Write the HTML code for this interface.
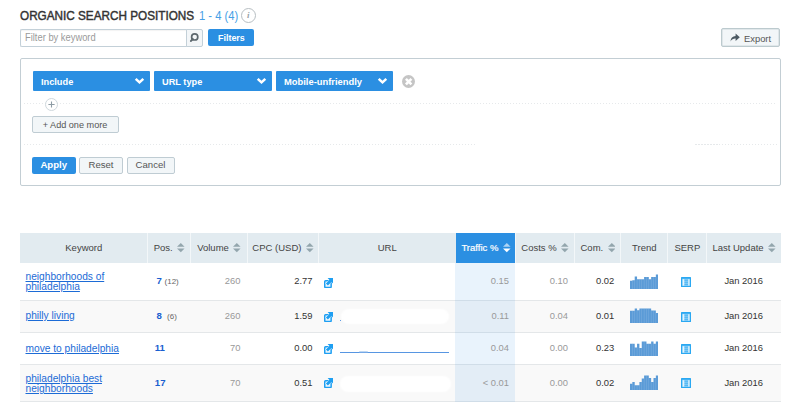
<!DOCTYPE html>
<html lang="en">
<head>
<meta charset="utf-8">
<title>Organic Search Positions</title>
<style>
*{box-sizing:border-box;margin:0;padding:0}
html,body{width:800px;height:413px;overflow:hidden;background:#fff}
body{position:relative;font-family:"Liberation Sans",Arial,sans-serif;color:#333}
.abs{position:absolute}
.sx{display:inline-block;transform-origin:0 50%;white-space:nowrap}
/* heading */
#title{left:20px;top:8px;height:16px;line-height:16px;font-size:12.6px;font-weight:normal;color:#333;white-space:nowrap;-webkit-text-stroke:.45px #333}
#title .sx{transform:scaleX(.932)}
#range{left:198.5px;top:8px;height:16px;line-height:16px;font-size:12.6px;color:#469fe6;white-space:nowrap}
#range .sx{transform:scaleX(.89)}
#info{left:241px;top:7.8px;width:15px;height:15px;border:1.2px solid #b7bec2;border-radius:50%;color:#98a1a6;font:italic bold 9px/12px "Liberation Serif",serif;text-align:center;padding-right:.5px}
/* toolbar */
#kw{left:20px;top:28.7px;width:167px;height:18px;border:1px solid #c3d0d8;border-right:none;border-radius:2px 0 0 2px;background:#fff;font-size:10px;line-height:16px;color:#9a9a9a;padding-left:4px;box-shadow:inset 0 1px 1px rgba(0,0,0,.05)}
#kw .sx{transform:scaleX(.935)}
#go{left:185.8px;top:28.7px;width:17.2px;height:18px;border:1px solid #c3d0d8;border-radius:0 2px 2px 0;background:#f3f6f8}
.btn{height:18px;line-height:17px;font-size:9.6px;text-align:center;border-radius:2px;white-space:nowrap}
.blue{background:#2b8fe2;color:#fff;font-weight:bold}
.grey{background:#f2f6f8;border:1px solid #bfccd3;color:#555;line-height:15px}
#filters{left:208.2px;top:28.8px;width:45.6px;height:17.7px}
#filters .sx{transform:scaleX(.93);transform-origin:50% 50%}
#export{left:720.9px;top:28.2px;width:59.3px;height:18.5px;line-height:16.5px;padding-top:1.8px;font-size:9.4px;border-color:#bccace;box-shadow:inset 0 0 0 .5px #cdd7db}
/* panel */
#panel{left:20px;top:58.3px;width:760.8px;height:127.7px;border:1px solid #c3ced4;border-radius:2px;background:#fff}
.dd{top:70.9px;height:20.3px;background:#2b8fe2;border-radius:1px;color:#fff;font-weight:bold;font-size:9.5px;line-height:22px;padding-left:8.4px}
.dd .sx{transform:scaleX(.97)}
.dd svg{position:absolute;right:4.6px;top:6.3px}
.dot{left:24px;width:753px;height:1px;background:repeating-linear-gradient(90deg,#e6e9eb 0 1.5px,transparent 1.5px 3px)}
#rm{left:401.6px;top:75px;width:13.3px;height:13.3px;border-radius:50%;background:#c5c5c5}
#plus{left:44.5px;top:97.5px;width:13px;height:13px;border-radius:50%;background:#fff;border:1px solid #cfd8dd}
#plus svg,#rm svg,#go svg{display:block}
/* table */
#thead{left:20px;top:233px;width:761px;height:29.5px;background:#e2ebf0}
.th{top:233px;height:29.5px;line-height:29.5px;font-size:9.5px;color:#444;white-space:nowrap;border-left:1px solid #f3f7f9;text-align:center}
.th.first{border-left:none}
.th.act{background:#2b8fe2;color:#fff;border-left:none;-webkit-text-stroke:.2px #fff}
.th svg{margin-left:4.6px;vertical-align:-1.6px}
.th svg path{fill:#93a6ad}
.th.act svg .u{fill:#fff;opacity:.62}
.th.act svg .d{fill:#fff}
.th.act{padding-left:1.5px}
#tcol{left:455px;top:262.5px;width:60px;height:139px;background:rgba(43,143,226,.105)}
.row{left:20px;width:761px;border-bottom:1px solid #e4e7e9}
.odd{background:#f9f9f9}
.blob{background:#fff;border-radius:7px;box-shadow:0 0 2px 1px #fff}
.c{font-size:9.4px;white-space:nowrap;height:12px;line-height:12px}
.r{text-align:right}
.g{color:#999}
.k{color:#333}
a.kw{position:absolute;left:25.5px;font-size:10.2px;line-height:10.2px;color:#1c6bd6;text-decoration:underline;white-space:nowrap}
.pos{color:#1a5fd0;font-weight:bold;font-size:9.6px}
.pos small{font-weight:normal;color:#666;font-size:8px}
</style>
</head>
<body>

<div class="abs" id="title"><span class="sx">ORGANIC SEARCH POSITIONS</span></div>
<div class="abs" id="range"><span class="sx">1 - 4 (4)</span></div>
<div class="abs" id="info">i</div>

<div class="abs" id="kw"><span class="sx">Filter by keyword</span></div>
<div class="abs" id="go"><svg width="15" height="16" viewBox="0 0 15 16"><circle cx="7.7" cy="6.9" r="3.1" fill="none" stroke="#5d686e" stroke-width="1.7"/><path d="M5.7 9.1 L4 10.9" stroke="#5d686e" stroke-width="2.1" stroke-linecap="round"/></svg></div>
<div class="abs btn blue" id="filters"><span class="sx">Filters</span></div>
<div class="abs btn grey" id="export"><svg width="10" height="9" viewBox="0 0 10 9" style="vertical-align:0px;margin-right:4px"><path d="M0.5 8.5 C0.8 5 2.5 3.2 5.6 3.1 L5.6 0.6 L9.8 4.3 L5.6 8 L5.6 5.6 C3.5 5.5 1.8 6.2 0.5 8.5 Z" fill="#4d5a63"/></svg>Export</div>

<div class="abs" id="panel"></div>
<div class="abs dd" style="left:32.5px;width:117.5px"><span class="sx">Include</span><svg width="11" height="8" viewBox="0 0 11 8"><path d="M1.7 1.8 L5.5 5.4 L9.3 1.8" fill="none" stroke="#fff" stroke-width="2.5"/></svg></div>
<div class="abs dd" style="left:154px;width:118px"><span class="sx">URL type</span><svg width="11" height="8" viewBox="0 0 11 8"><path d="M1.7 1.8 L5.5 5.4 L9.3 1.8" fill="none" stroke="#fff" stroke-width="2.5"/></svg></div>
<div class="abs dd" style="left:276px;width:117px"><span class="sx" style="transform:scaleX(.985)">Mobile-unfriendly</span><svg width="11" height="8" viewBox="0 0 11 8"><path d="M1.7 1.8 L5.5 5.4 L9.3 1.8" fill="none" stroke="#fff" stroke-width="2.5"/></svg></div>
<div class="abs" id="rm"><svg width="13.3" height="13.3" viewBox="0 0 13.3 13.3"><path d="M3.9 3.9 L9.4 9.4 M9.4 3.9 L3.9 9.4" stroke="#fff" stroke-width="2.6"/></svg></div>

<div class="abs dot" style="top:103px"></div>
<div class="abs" id="plus"><svg width="11" height="11" viewBox="0 0 11 11"><path d="M5.5 2.4 V8.6 M2.4 5.5 H8.6" stroke="#8d9ca5" stroke-width="1.1"/></svg></div>
<div class="abs btn grey" style="left:32px;top:116px;width:87px;height:17px"><span class="sx" style="transform:scaleX(.95);transform-origin:50% 50%">+ Add one more</span></div>
<div class="abs dot" style="top:144px;width:453px"></div>
<div class="abs dot" style="top:144px;left:695px;width:82px"></div>
<div class="abs btn blue" style="left:32px;top:157px;width:43.5px;height:16.5px;line-height:16px">Apply</div>
<div class="abs btn grey" style="left:79px;top:157px;width:44px;height:16.5px;line-height:14px">Reset</div>
<div class="abs btn grey" style="left:126.5px;top:157px;width:48px;height:16.5px;line-height:14px">Cancel</div>

<!-- table -->
<div class="abs" id="thead"></div>
<div class="abs th first" style="left:20px;width:127.5px"><span>Keyword</span></div>
<div class="abs th" style="left:147.0px;width:43.7px"><span>Pos.</span><svg width="7.6" height="9.2" viewBox="0 0 7.6 9.2"><path class="u" d="M3.8 0 L7.6 3.7 H0 Z"/><path class="d" d="M0 5.5 H7.6 L3.8 9.2 Z"/></svg></div>
<div class="abs th" style="left:190.2px;width:56.8px"><span>Volume</span><svg width="7.6" height="9.2" viewBox="0 0 7.6 9.2"><path class="u" d="M3.8 0 L7.6 3.7 H0 Z"/><path class="d" d="M0 5.5 H7.6 L3.8 9.2 Z"/></svg></div>
<div class="abs th" style="left:246.5px;width:72.0px"><span>CPC (USD)</span><svg width="7.6" height="9.2" viewBox="0 0 7.6 9.2"><path class="u" d="M3.8 0 L7.6 3.7 H0 Z"/><path class="d" d="M0 5.5 H7.6 L3.8 9.2 Z"/></svg></div>
<div class="abs th" style="left:318.0px;width:137.5px"><span>URL</span></div>
<div class="abs th act" style="left:455.5px;width:59.5px"><span>Traffic %</span><svg width="7.6" height="9.2" viewBox="0 0 7.6 9.2"><path class="u" d="M3.8 0 L7.6 3.7 H0 Z"/><path class="d" d="M0 5.5 H7.6 L3.8 9.2 Z"/></svg></div>
<div class="abs th" style="left:514.5px;width:60.2px"><span>Costs %</span><svg width="7.6" height="9.2" viewBox="0 0 7.6 9.2"><path class="u" d="M3.8 0 L7.6 3.7 H0 Z"/><path class="d" d="M0 5.5 H7.6 L3.8 9.2 Z"/></svg></div>
<div class="abs th" style="left:574.2px;width:46.5px"><span>Com.</span><svg width="7.6" height="9.2" viewBox="0 0 7.6 9.2"><path class="u" d="M3.8 0 L7.6 3.7 H0 Z"/><path class="d" d="M0 5.5 H7.6 L3.8 9.2 Z"/></svg></div>
<div class="abs th" style="left:620.2px;width:47.3px"><span>Trend</span></div>
<div class="abs th" style="left:667.0px;width:39.7px"><span>SERP</span></div>
<div class="abs th" style="left:706.2px;width:74.8px"><span>Last Update</span><svg width="7.6" height="9.2" viewBox="0 0 7.6 9.2"><path class="u" d="M3.8 0 L7.6 3.7 H0 Z"/><path class="d" d="M0 5.5 H7.6 L3.8 9.2 Z"/></svg></div>
<div class="abs row" style="top:263.1px;height:37.5px"></div>
<div class="abs row odd" style="top:300.6px;height:32.0px"></div>
<div class="abs row" style="top:332.6px;height:32.0px"></div>
<div class="abs row odd" style="top:364.6px;height:37.3px"></div>
<div class="abs" id="tcol"></div>
<a class="kw" style="top:271.9px">neighborhoods of<br>philadelphia</a>
<div class="abs c pos" style="left:156.5px;top:275.1px">7 <small>(12)</small></div>
<div class="abs c r g" style="left:200px;width:40.5px;top:275.1px">260</div>
<div class="abs c r k" style="left:260px;width:52.5px;top:275.1px">2.77</div>
<svg class="abs ext" style="left:323.7px;top:277.5px" width="9.4" height="10.3" viewBox="0 0 9.4 10.3"><rect x="0.75" y="2.75" width="6.4" height="6.8" rx=".8" fill="#eaf6fe" stroke="#1e9ff2" stroke-width="1.5"/><path d="M3.6 0 H9.4 V5.8 L7.5 3.9 L3.9 7.5 L1.9 5.5 L5.5 1.9 Z" fill="#1e9ff2" stroke="#fff" stroke-width=".7" paint-order="stroke"/></svg>
<div class="abs c r g" style="left:470px;width:39px;top:275.1px">0.15</div>
<div class="abs c r g" style="left:530px;width:38px;top:275.1px">0.10</div>
<div class="abs c r k" style="left:580px;width:34.2px;top:275.1px">0.02</div>
<svg class="abs" style="left:629.8px;top:272.8px" width="28.3" height="16" viewBox="0 0 28.3 16"><g fill="#5b9bd7"><path d="M0 16 V7.7 H2.35 V7.2 H4.70 V3.4 H7.05 V6.2 H9.40 V6.2 H11.75 V6.2 H14.10 V4.0 H16.45 V4.0 H18.80 V6.2 H21.15 V4.0 H23.50 V4.0 H25.85 V1.4 H28.20 V16 Z"/></g><g fill="#a9cbec" opacity=".45"><rect x="2.10" y="7.7" width="0.5" height="8.3"/><rect x="4.45" y="7.2" width="0.5" height="8.8"/><rect x="6.80" y="6.2" width="0.5" height="9.8"/><rect x="9.15" y="6.2" width="0.5" height="9.8"/><rect x="11.50" y="6.2" width="0.5" height="9.8"/><rect x="13.85" y="6.2" width="0.5" height="9.8"/><rect x="16.20" y="4.0" width="0.5" height="12.0"/><rect x="18.55" y="6.2" width="0.5" height="9.8"/><rect x="20.90" y="6.2" width="0.5" height="9.8"/><rect x="23.25" y="4.0" width="0.5" height="12.0"/><rect x="25.60" y="4.0" width="0.5" height="12.0"/></g></svg>
<svg class="abs" style="left:681.3px;top:277px" width="10" height="10" viewBox="0 0 10 10"><rect x="0" y="0" width="10" height="10" rx=".5" fill="#2aa8f2"/><rect x="1.1" y="1.7" width="7.8" height="7.3" fill="#7ecaf7"/><rect x="1.7" y="2.2" width="1.6" height="6.4" fill="#e4f4fe"/><rect x="7.2" y="2.2" width="1.3" height="6.4" fill="#d8effd"/><path d="M3.6 3.3 H7 M3.6 5.4 H7 M3.6 7.5 H7" stroke="#4fb5f4" stroke-width=".9"/></svg>
<div class="abs c k" style="left:706.7px;width:74px;text-align:center;top:275.1px">Jan 2016</div>
<a class="kw" style="top:311.0px">philly living</a>
<div class="abs c pos" style="left:156.5px;top:309.8px">8 <small style="margin-left:2.5px">(6)</small></div>
<div class="abs c r g" style="left:200px;width:40.5px;top:309.8px">260</div>
<div class="abs c r k" style="left:260px;width:52.5px;top:309.8px">1.59</div>
<svg class="abs ext" style="left:323.7px;top:311.5px" width="9.4" height="10.3" viewBox="0 0 9.4 10.3"><rect x="0.75" y="2.75" width="6.4" height="6.8" rx=".8" fill="#eaf6fe" stroke="#1e9ff2" stroke-width="1.5"/><path d="M3.6 0 H9.4 V5.8 L7.5 3.9 L3.9 7.5 L1.9 5.5 L5.5 1.9 Z" fill="#1e9ff2" stroke="#fff" stroke-width=".7" paint-order="stroke"/></svg>
<div class="abs c r g" style="left:470px;width:39px;top:309.8px">0.11</div>
<div class="abs c r g" style="left:530px;width:38px;top:309.8px">0.04</div>
<div class="abs c r k" style="left:580px;width:34.2px;top:309.8px">0.01</div>
<svg class="abs" style="left:629.8px;top:307.2px" width="28.3" height="16" viewBox="0 0 28.3 16"><g fill="#5b9bd7"><path d="M0 16 V3.8 H2.35 V3.8 H4.70 V1.6 H7.05 V3.3 H9.40 V1.6 H11.75 V1.6 H14.10 V1.6 H16.45 V1.6 H18.80 V1.6 H21.15 V3.6 H23.50 V3.6 H25.85 V6.0 H28.20 V16 Z"/></g><g fill="#a9cbec" opacity=".45"><rect x="2.10" y="3.8" width="0.5" height="12.2"/><rect x="4.45" y="3.8" width="0.5" height="12.2"/><rect x="6.80" y="3.3" width="0.5" height="12.7"/><rect x="9.15" y="3.3" width="0.5" height="12.7"/><rect x="11.50" y="1.6" width="0.5" height="14.4"/><rect x="13.85" y="1.6" width="0.5" height="14.4"/><rect x="16.20" y="1.6" width="0.5" height="14.4"/><rect x="18.55" y="1.6" width="0.5" height="14.4"/><rect x="20.90" y="3.6" width="0.5" height="12.4"/><rect x="23.25" y="3.6" width="0.5" height="12.4"/><rect x="25.60" y="6.0" width="0.5" height="10.0"/></g></svg>
<svg class="abs" style="left:681.3px;top:311.8px" width="10" height="10" viewBox="0 0 10 10"><rect x="0" y="0" width="10" height="10" rx=".5" fill="#2aa8f2"/><rect x="1.1" y="1.7" width="7.8" height="7.3" fill="#7ecaf7"/><rect x="1.7" y="2.2" width="1.6" height="6.4" fill="#e4f4fe"/><rect x="7.2" y="2.2" width="1.3" height="6.4" fill="#d8effd"/><path d="M3.6 3.3 H7 M3.6 5.4 H7 M3.6 7.5 H7" stroke="#4fb5f4" stroke-width=".9"/></svg>
<div class="abs c k" style="left:706.7px;width:74px;text-align:center;top:309.8px">Jan 2016</div>
<a class="kw" style="top:343.8px">move to philadelphia</a>
<div class="abs c pos" style="left:154.8px;top:341.8px">11</div>
<div class="abs c r g" style="left:200px;width:40.5px;top:341.8px">70</div>
<div class="abs c r k" style="left:260px;width:52.5px;top:341.8px">0.00</div>
<svg class="abs ext" style="left:323.7px;top:343.5px" width="9.4" height="10.3" viewBox="0 0 9.4 10.3"><rect x="0.75" y="2.75" width="6.4" height="6.8" rx=".8" fill="#eaf6fe" stroke="#1e9ff2" stroke-width="1.5"/><path d="M3.6 0 H9.4 V5.8 L7.5 3.9 L3.9 7.5 L1.9 5.5 L5.5 1.9 Z" fill="#1e9ff2" stroke="#fff" stroke-width=".7" paint-order="stroke"/></svg>
<div class="abs c r g" style="left:470px;width:39px;top:341.8px">0.04</div>
<div class="abs c r g" style="left:530px;width:38px;top:341.8px">0.00</div>
<div class="abs c r k" style="left:580px;width:34.2px;top:341.8px">0.23</div>
<svg class="abs" style="left:629.8px;top:339.5px" width="28.3" height="16" viewBox="0 0 28.3 16"><g fill="#5b9bd7"><path d="M0 16 V3.7 H2.35 V3.7 H4.70 V7.5 H7.05 V3.7 H9.40 V8.0 H11.75 V1.5 H14.10 V1.5 H16.45 V3.7 H18.80 V3.7 H21.15 V1.5 H23.50 V3.7 H25.85 V1.5 H28.20 V16 Z"/></g><g fill="#a9cbec" opacity=".45"><rect x="2.10" y="3.7" width="0.5" height="12.3"/><rect x="4.45" y="7.5" width="0.5" height="8.5"/><rect x="6.80" y="7.5" width="0.5" height="8.5"/><rect x="9.15" y="8.0" width="0.5" height="8.0"/><rect x="11.50" y="8.0" width="0.5" height="8.0"/><rect x="13.85" y="1.5" width="0.5" height="14.5"/><rect x="16.20" y="3.7" width="0.5" height="12.3"/><rect x="18.55" y="3.7" width="0.5" height="12.3"/><rect x="20.90" y="3.7" width="0.5" height="12.3"/><rect x="23.25" y="3.7" width="0.5" height="12.3"/><rect x="25.60" y="3.7" width="0.5" height="12.3"/></g></svg>
<svg class="abs" style="left:681.3px;top:343.8px" width="10" height="10" viewBox="0 0 10 10"><rect x="0" y="0" width="10" height="10" rx=".5" fill="#2aa8f2"/><rect x="1.1" y="1.7" width="7.8" height="7.3" fill="#7ecaf7"/><rect x="1.7" y="2.2" width="1.6" height="6.4" fill="#e4f4fe"/><rect x="7.2" y="2.2" width="1.3" height="6.4" fill="#d8effd"/><path d="M3.6 3.3 H7 M3.6 5.4 H7 M3.6 7.5 H7" stroke="#4fb5f4" stroke-width=".9"/></svg>
<div class="abs c k" style="left:706.7px;width:74px;text-align:center;top:341.8px">Jan 2016</div>
<a class="kw" style="top:374.1px">philadelphia best<br>neighborhoods</a>
<div class="abs c pos" style="left:154.8px;top:376.6px">17</div>
<div class="abs c r g" style="left:200px;width:40.5px;top:376.6px">70</div>
<div class="abs c r k" style="left:260px;width:52.5px;top:376.6px">0.51</div>
<svg class="abs ext" style="left:323.7px;top:378px" width="9.4" height="10.3" viewBox="0 0 9.4 10.3"><rect x="0.75" y="2.75" width="6.4" height="6.8" rx=".8" fill="#eaf6fe" stroke="#1e9ff2" stroke-width="1.5"/><path d="M3.6 0 H9.4 V5.8 L7.5 3.9 L3.9 7.5 L1.9 5.5 L5.5 1.9 Z" fill="#1e9ff2" stroke="#fff" stroke-width=".7" paint-order="stroke"/></svg>
<div class="abs c r g" style="left:470px;width:39px;top:376.6px">&lt; 0.01</div>
<div class="abs c r g" style="left:530px;width:38px;top:376.6px">0.00</div>
<div class="abs c r k" style="left:580px;width:34.2px;top:376.6px">0.02</div>
<svg class="abs" style="left:629.8px;top:373.9px" width="28.3" height="16" viewBox="0 0 28.3 16"><g fill="#5b9bd7"><path d="M0 16 V9.7 H2.35 V7.9 H4.70 V11.3 H7.05 V11.3 H9.40 V7.9 H11.75 V4.4 H14.10 V1.4 H16.45 V1.4 H18.80 V4.1 H21.15 V7.9 H23.50 V4.1 H25.85 V1.4 H28.20 V16 Z"/></g><g fill="#a9cbec" opacity=".45"><rect x="2.10" y="9.7" width="0.5" height="6.3"/><rect x="4.45" y="11.3" width="0.5" height="4.7"/><rect x="6.80" y="11.3" width="0.5" height="4.7"/><rect x="9.15" y="11.3" width="0.5" height="4.7"/><rect x="11.50" y="7.9" width="0.5" height="8.1"/><rect x="13.85" y="4.4" width="0.5" height="11.6"/><rect x="16.20" y="1.4" width="0.5" height="14.6"/><rect x="18.55" y="4.1" width="0.5" height="11.9"/><rect x="20.90" y="7.9" width="0.5" height="8.1"/><rect x="23.25" y="7.9" width="0.5" height="8.1"/><rect x="25.60" y="4.1" width="0.5" height="11.9"/></g></svg>
<svg class="abs" style="left:681.3px;top:378.2px" width="10" height="10" viewBox="0 0 10 10"><rect x="0" y="0" width="10" height="10" rx=".5" fill="#2aa8f2"/><rect x="1.1" y="1.7" width="7.8" height="7.3" fill="#7ecaf7"/><rect x="1.7" y="2.2" width="1.6" height="6.4" fill="#e4f4fe"/><rect x="7.2" y="2.2" width="1.3" height="6.4" fill="#d8effd"/><path d="M3.6 3.3 H7 M3.6 5.4 H7 M3.6 7.5 H7" stroke="#4fb5f4" stroke-width=".9"/></svg>
<div class="abs c k" style="left:706.7px;width:74px;text-align:center;top:376.6px">Jan 2016</div>
<div class="abs blob" style="left:341.5px;top:310px;width:106.5px;height:12.5px"></div>
<div class="abs" style="left:339.8px;top:320px;width:1.3px;height:1.4px;background:#5f9be3"></div>
<div class="abs" style="left:339.5px;top:351.8px;width:109.5px;height:1px;background:#5796e2"></div>
<div class="abs" style="left:359px;top:350.8px;width:9px;height:2.6px;background:#8db8ea;opacity:.55;border-radius:1px"></div>
<div class="abs blob" style="left:340.5px;top:376.5px;width:109.5px;height:14px"></div>

</body>
</html>
